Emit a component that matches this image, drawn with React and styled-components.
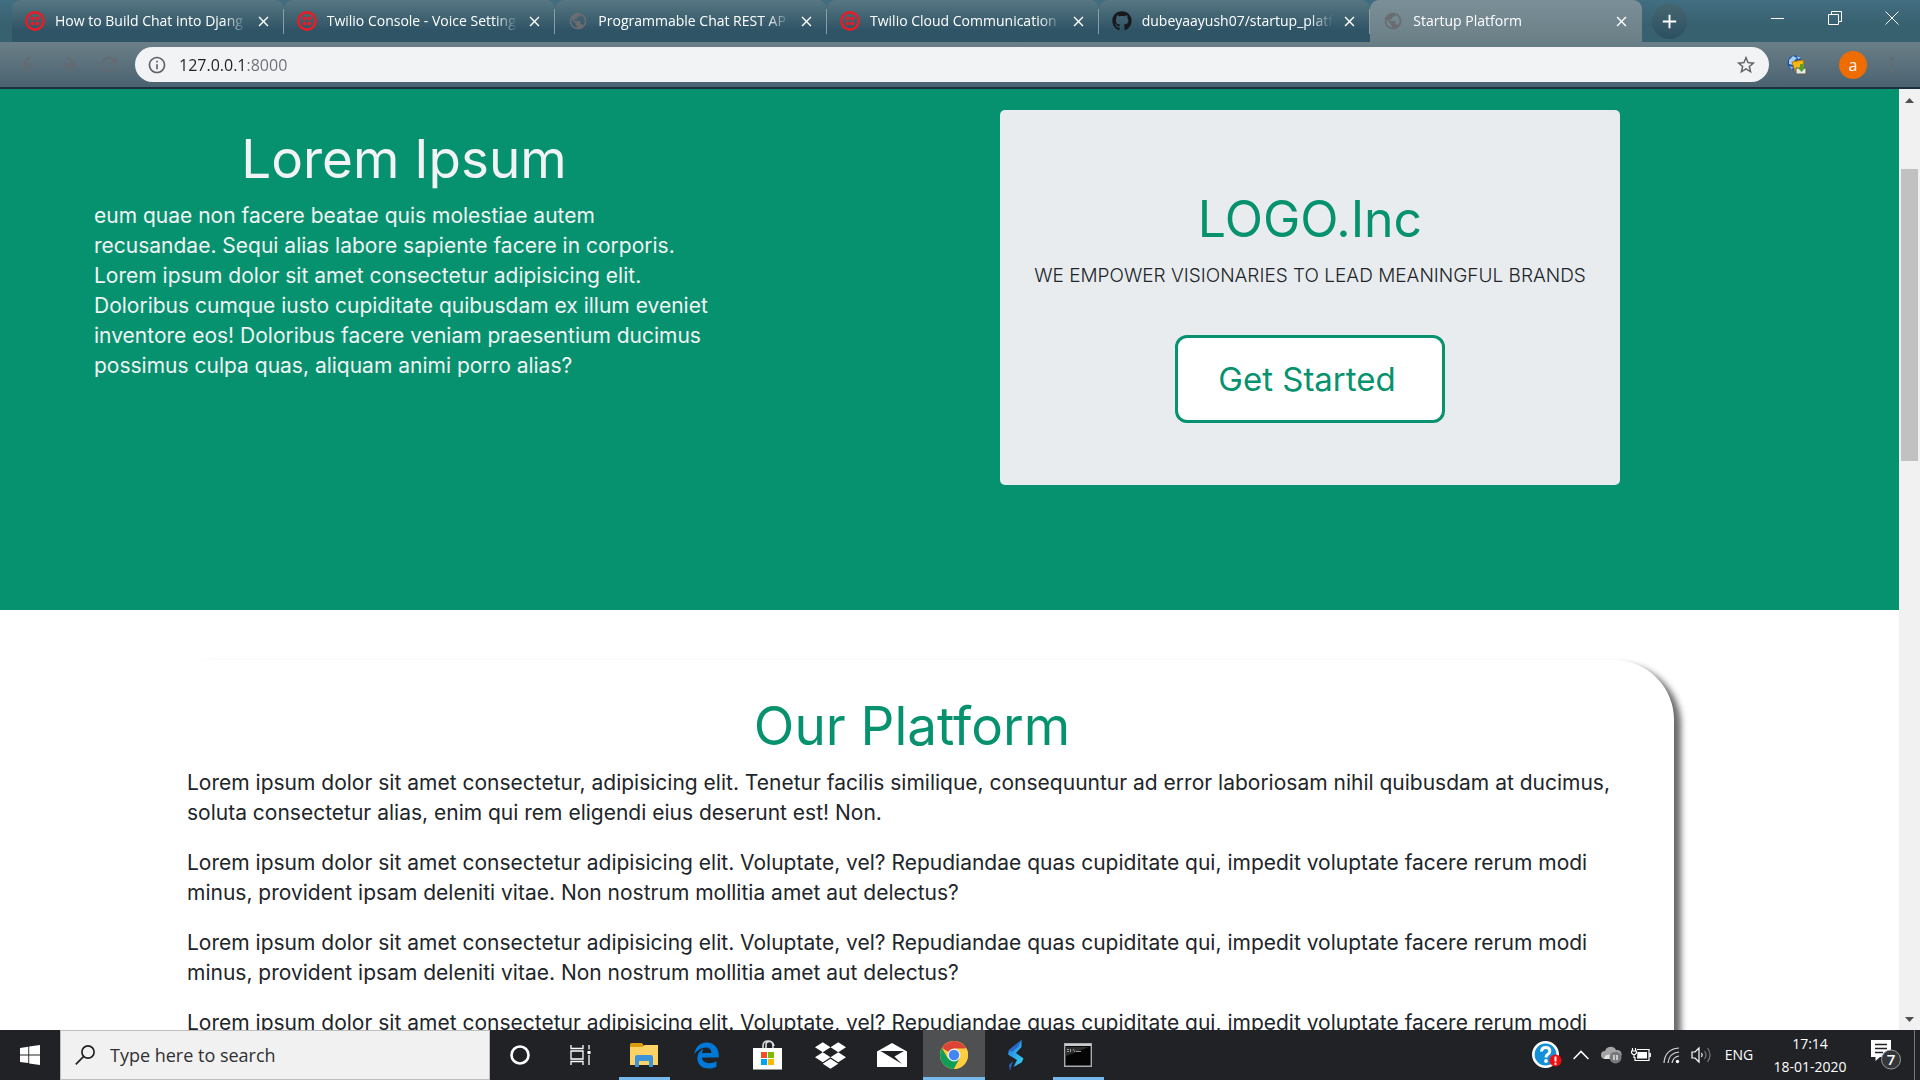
import React from "react";
import styled, { createGlobalStyle, css } from "styled-components";
import { FaGithub, FaEdgeLegacy, FaDropbox } from "react-icons/fa";
import {
  MdPublic,
  MdArrowBack,
  MdArrowForward,
  MdRefresh,
  MdInfoOutline,
  MdStarBorder,
  MdMoreVert,
  MdClose,
  MdAdd,
} from "react-icons/md";

const green = "#07926f";
const uiFont = '"Open Sans", "Noto Sans", sans-serif';
const pageFont = 'Inter, "Open Sans", sans-serif';

const GlobalStyle = createGlobalStyle`
  *, *::before, *::after { box-sizing: border-box; }
  body { margin: 0; font-family: ${uiFont}; }
  h1, h2, p { margin: 0; }
  button, input { font: inherit; }
  svg { display: block; flex: none; }
`;

const Screen = styled.div`
  display: flex;
  flex-direction: column;
  height: 100vh;
  overflow: hidden;
`;

const PlainButton = styled.button`
  display: flex;
  align-items: center;
  justify-content: center;
  padding: 0;
  border: 0;
  background: none;
  color: inherit;
`;

/* Browser window */

const TabStrip = styled.header`
  display: flex;
  flex: none;
  height: 42px;
  padding-left: 12px;
  background: linear-gradient(#426e82, #38616f 60%, #38616f);
  color: #fff;
`;

const TabList = styled.nav`
  display: flex;
  flex: 0 1 1630px;
  min-width: 0;
`;

const Tab = styled.div`
  position: relative;
  display: flex;
  flex: 1 1 0;
  align-items: center;
  min-width: 0;
  padding: 0 12px 0 13px;
  border-radius: 9px 9px 0 0;
  background: linear-gradient(#577782, #2f5466 72%);

  &:not(:last-child)::after {
    content: "";
    position: absolute;
    right: 0;
    top: 9px;
    width: 1px;
    height: 25px;
    background: #8b9da6;
  }

  ${(p) =>
    p.$active &&
    css`
      background: linear-gradient(#7b8f98, #6b7f87);
    `}
`;

const TabTitle = styled(PlainButton)`
  flex: 1;
  justify-content: flex-start;
  min-width: 0;
  margin: 0 8px 0 10px;
  overflow: hidden;
  font-size: 14px;
  line-height: 20px;
  white-space: nowrap;
  mask-image: linear-gradient(90deg, #000 88%, transparent);
`;

const NewTab = styled(PlainButton)`
  width: 35px;
  height: 35px;
  margin: 4px 0 0 10px;
  border-radius: 50%;
  background: linear-gradient(#46656f, #2c5062);
`;

const WindowControls = styled.div`
  display: flex;
  margin-left: auto;
`;

const WindowButton = styled(PlainButton)`
  width: 57px;
  height: 36px;
`;

const Toolbar = styled.div`
  display: flex;
  flex: none;
  align-items: center;
  height: 47px;
  padding: 0 20px 0 8px;
  border-bottom: 2px solid #1b3140;
  background: linear-gradient(#6a7f87, #4b6271);
  color: #666a70;
`;

const ToolButton = styled(PlainButton)`
  width: 40px;
  height: 36px;
`;

const AddressBar = styled.form`
  display: flex;
  flex: 1;
  align-items: center;
  height: 35px;
  margin-left: 7px;
  padding: 0 12px;
  border-radius: 18px;
  background: #f1f3f5;
  color: #5f6368;
`;

const AddressInput = styled.input`
  flex: 1;
  min-width: 0;
  margin-left: 12px;
  padding: 0;
  border: 0;
  outline: 0;
  font-size: 16px;
  line-height: 24px;
  color: transparent;
  background: linear-gradient(90deg, #202124 68px, #6b6f74 68px);
  background-clip: text;
`;

const Extension = styled(PlainButton)`
  width: 36px;
  height: 36px;
  margin-left: 10px;
`;

const Avatar = styled(PlainButton)`
  width: 28px;
  height: 28px;
  margin: 0 10px 0 24px;
  border-radius: 50%;
  background: #ef6c00;
  color: #fff;
  font-size: 16px;
  line-height: 24px;
`;

const MenuButton = styled(PlainButton)`
  width: 16px;
  height: 36px;
  margin-left: 7px;
`;

/* Web page */

const Viewport = styled.div`
  display: flex;
  flex: 1;
  min-height: 0;
`;

const Page = styled.main`
  flex: 1;
  min-width: 0;
  overflow: hidden;
  background: #fff;
  color: #212529;
  font-family: ${pageFont};
`;

const Hero = styled.section`
  display: grid;
  grid-template-columns: 1fr 1fr;
  column-gap: 286px;
  align-items: start;
  padding: 21px 279px 125px 94px;
  background: ${green};
`;

const Intro = styled.div`
  padding-top: 20px;
  color: #f1f3f5;
`;

const Heading = styled.h1`
  margin-bottom: 13px;
  color: ${(p) => p.$color || green};
  font-size: ${(p) => p.$size || 53}px;
  font-weight: 400;
  line-height: 58px;
  text-align: center;
`;

const Line = styled.span`
  display: block;
  white-space: nowrap;
`;

const Copy = styled.p`
  font-size: ${(p) => p.$size || 21}px;
  font-weight: ${(p) => p.$weight || 400};
  line-height: 30px;

  & + & {
    margin-top: 20px;
  }
`;

const LogoCard = styled.div`
  display: flex;
  flex-direction: column;
  align-items: center;
  padding: 80px 32px 62px;
  border-radius: 5px;
  background: #e8ecef;
`;

const StartButton = styled.button`
  width: 270px;
  margin-top: 44px;
  padding: 17px 6px 17px 0;
  border: 3px solid ${green};
  border-radius: 12px;
  background: #fff;
  color: ${green};
  font-size: 33px;
  line-height: 48px;
`;

const Platform = styled.section`
  margin: 50px 225px 0 150px;
  padding: 37px 37px 60px;
  border-radius: 60px;
  background: #fff;
  box-shadow: 7px 5px 6px #6b6b6b;
`;

const ScrollTrack = styled.div`
  display: flex;
  flex: none;
  flex-direction: column;
  align-items: center;
  width: 21px;
  background: #f1f1f1;
`;

const ScrollArrow = styled(PlainButton)`
  width: 21px;
  height: 21px;
`;

const ScrollThumb = styled.div`
  width: 17px;
  height: 292px;
  margin: 59px 0 auto;
  background: #c1c1c1;
`;

/* Taskbar */

const Taskbar = styled.footer`
  display: flex;
  flex: none;
  height: 50px;
  background: #202226;
  color: #fff;
`;

const TaskButton = styled(PlainButton)`
  width: ${(p) => p.$width || 62}px;
  height: 50px;
  background: ${(p) => (p.$active ? "#4e5052" : "none")};
`;

const OpenMark = styled.span`
  display: flex;
  align-items: center;
  justify-content: center;
  width: ${(p) => (p.$wide ? "62px" : "51px")};
  height: 50px;
  padding-top: 3px;
  border-bottom: 3px solid #76b9ed;
`;

const SearchBox = styled.label`
  display: flex;
  flex: none;
  align-items: center;
  width: 430px;
  padding-left: 14px;
  border: 1px solid #bdbdbd;
  background: #f1f1f1;
`;

const SearchInput = styled.input`
  flex: 1;
  min-width: 0;
  margin-left: 14px;
  padding: 0;
  border: 0;
  outline: 0;
  background: none;
  font-size: 18px;
  line-height: 26px;

  &::placeholder {
    color: #2f3033;
    opacity: 1;
  }
`;

const AppButtons = styled.div`
  display: flex;
  margin-left: 3px;
`;

const Tray = styled.div`
  display: flex;
  align-items: center;
  margin-left: auto;
`;

const TrayButton = styled(PlainButton)`
  width: ${(p) => p.$width || 30}px;
  height: 50px;
  font-size: 14px;
  line-height: 20px;
`;

const Clock = styled(PlainButton)`
  flex-direction: column;
  width: 96px;
  height: 50px;
  font-size: 14px;
  line-height: 23px;
`;

const ShowDesktop = styled(PlainButton)`
  width: 6px;
  height: 50px;
  border-left: 1px solid #74767a;
`;

const TwilioIcon = () => (
  <svg width="20" height="20" viewBox="0 0 20 20">
    <circle cx="10" cy="10" r="8.6" fill="none" stroke="#e31e26" strokeWidth="2.6" />
    <g fill="#e31e26">
      <circle cx="7.6" cy="7.6" r="2" />
      <circle cx="12.4" cy="7.6" r="2" />
      <circle cx="7.6" cy="12.4" r="2" />
      <circle cx="12.4" cy="12.4" r="2" />
    </g>
  </svg>
);

const Globe = () => <MdPublic size={20} color="#6a6c6f" />;

const ExtensionIcon = () => (
  <svg width="20" height="20" viewBox="0 0 20 20">
    <circle cx="8" cy="8" r="7.5" fill="#1d4f9e" />
    <path d="M2 5l4-4 4 2-3 3-1 4-4-1zM10 1l4 2-3 1z" fill="#a9cdf0" />
    <path d="M2 11l4 1-1 3z" fill="#86b5e4" />
    <path d="M5 7l11-2 1 10-9 1z" fill="#f5b916" stroke="#bb7c0a" />
    <path d="M9 13h10v6H9z" fill="#e7e7df" stroke="#5a5a55" />
    <path d="M13 9h3v4h2l-3.500 4-3.500-4h2z" fill="#4da331" />
  </svg>
);

const WindowsLogo = () => (
  <svg width="20" height="20" viewBox="0 0 20 20" fill="#fff">
    <path d="M0 3l8.300-1.200v7.700H0zM9.200 1.600L20 0v9.500H9.200zM0 10.400h8.300v7.700L0 17zM9.200 10.400H20V20L9.200 18.400z" />
  </svg>
);

const SearchGlass = () => (
  <svg width="21" height="20" viewBox="0 0 21 20" fill="none" stroke="#222" strokeWidth="1.700">
    <circle cx="13" cy="7" r="6.100" />
    <path d="M8.700 11.300L.8 19.300" />
  </svg>
);

const TaskViewIcon = () => (
  <svg width="21" height="20" viewBox="0 0 21 20" fill="none" stroke="#fff" strokeWidth="1.300">
    <path d="M1 0v3.500h12V0M1 20v-3.500h12V20M1 6h12v8H1zM19 0v4.500M19 10v10" />
    <path d="M17.500 6h3v3h-3z" fill="#fff" stroke="none" />
  </svg>
);

const ExplorerIcon = () => (
  <svg width="28" height="24" viewBox="0 0 28 24">
    <path d="M0 1.500Q0 0 1.500 0H12l2 3v5H0z" fill="#dc9b0c" />
    <path d="M0 4h12.500l2-2H28v20H0z" fill="#fdd365" />
    <path d="M5 24V14q0-2 2-2h14q2 0 2 2v10h-4v-6h-10v6z" fill="#3d93d8" />
  </svg>
);

const StoreIcon = () => (
  <svg width="30" height="30" viewBox="0 0 30 30">
    <path d="M10 9V6q0-5 5-5t5 5v3M13 8V5q0-3.500 3.500-3.500T21 6" fill="none" stroke="#ddd" strokeWidth="1.600" />
    <path d="M0 8h29v21.500H0z" fill="#fff" />
    <path d="M8 12h6v6H8z" fill="#f25022" />
    <path d="M15 12h6v6h-6z" fill="#7fba00" />
    <path d="M8 19h6v6H8z" fill="#00a4ef" />
    <path d="M15 19h6v6h-6z" fill="#ffb900" />
  </svg>
);

const MailIcon = () => (
  <svg width="30" height="24" viewBox="0 0 30 24">
    <path d="M0 8.500L15 0l15 8.500V24H0z" fill="#fff" />
    <path d="M3.500 8h23.500l-9.500 5.500 7.500 7.500z" fill="#202226" />
  </svg>
);

const ChromeIcon = () => (
  <svg width="28" height="28" viewBox="0 0 28 28">
    <circle cx="14" cy="14" r="14" fill="#ffcd40" />
    <path d="M14 14L1.880 7A14 14 0 0 1 26.120 7z" fill="#db4437" />
    <path d="M1.880 7A14 14 0 0 0 14 28l6-10.500L8 17.500z" fill="#0f9d58" />
    <path d="M14 7.500h12.400A14 14 0 0 1 14 28l5.600-10.700z" fill="#ffcd40" />
    <circle cx="14" cy="14" r="6.500" fill="#f1f1f1" />
    <circle cx="14" cy="14" r="5.200" fill="#4285f4" />
  </svg>
);

const BoltIcon = () => (
  <svg width="16" height="31" viewBox="0 0 16 31">
    <defs>
      <linearGradient id="bolt" x1="0" y1="0" x2="1" y2="1">
        <stop offset="0" stopColor="#2475e8" />
        <stop offset="1" stopColor="#35d6f0" />
      </linearGradient>
    </defs>
    <path d="M13.500 0v7L8 13l7.500 5.500-2 4-8 4.500 3.500-7L0 14.500 1 10z" fill="url(#bolt)" />
    <path d="M13.500 0L1 10l3 2 6-5zM2 31l3-10-4 4z" fill="#2b66c9" />
  </svg>
);

const TerminalIcon = () => (
  <svg width="28" height="24" viewBox="0 0 28 24">
    <path d="M.7.700h26.600v22.600H.7z" fill="#050505" stroke="#a9abad" strokeWidth="1.400" />
    <path d="M1 1h26v2H1z" fill="#c9cbcd" />
    <path d="M2 4h23L2 13z" fill="#2c2e30" />
    <path d="M3 6.500h2M3 8.500h2M6.500 6v3M9 6l2 3M12 8.500h5" stroke="#bbb" strokeWidth=".8" fill="none" />
  </svg>
);

const HelpIcon = () => (
  <svg width="30" height="28" viewBox="0 0 30 28">
    <circle cx="13.500" cy="13.500" r="12.200" fill="#1290d8" stroke="#fff" strokeWidth="2.600" />
    <path d="M9.500 10.500q.3-4 4.300-4t4 3.700q0 2-2.200 3.300-1.600 1-1.600 3" fill="none" stroke="#fff" strokeWidth="3" />
    <circle cx="14" cy="20" r="1.900" fill="#fff" />
    <circle cx="23.500" cy="19.500" r="6" fill="#f00d0d" />
    <path d="M23.500 15.500v5M23.500 21.800v2" stroke="#fff" strokeWidth="2" />
  </svg>
);

const ChevronUp = () => (
  <svg width="16" height="10" viewBox="0 0 16 10" fill="none" stroke="#fff" strokeWidth="1.500">
    <path d="M.6 9L8 1.400 15.400 9" />
  </svg>
);

const CloudIcon = () => (
  <svg width="21" height="18" viewBox="0 0 21 18">
    <path d="M4 13a4 4 0 0 1 0-8 6 6 0 0 1 11-1 4.500 4.500 0 0 1 2 9z" fill="#a5a5a5" />
    <path d="M3 13q1-5 6-4l5-4 2 8z" fill="#e3e3e3" />
    <circle cx="14.500" cy="11.500" r="6" fill="#77797b" />
    <path d="M13 9v5M16 9v5" stroke="#fff" strokeWidth="1.200" />
  </svg>
);

const BatteryIcon = () => (
  <svg width="20" height="14" viewBox="0 0 20 14" fill="none" stroke="#fff">
    <path d="M6 1.500h12v11H4V9M19.300 5v4M1.500 0v3M4.500 0v3M.5 3h5v2L4 6.500H2L.5 5zM3 7v3" strokeWidth="1.200" />
    <path d="M6.500 4H16v6.500H6z" fill="#fff" stroke="none" />
  </svg>
);

const WifiIcon = () => (
  <svg width="17" height="17" viewBox="0 0 17 17" fill="none" stroke="#d8d8d8" strokeWidth="1.200">
    <path d="M1 16Q2 2 16 1M5 16Q6 6 16 5M9 16Q10 10 16 9" />
    <circle cx="14.500" cy="14.500" r="1.700" fill="#fff" stroke="none" />
  </svg>
);

const SpeakerIcon = () => (
  <svg width="21" height="18" viewBox="0 0 21 18" fill="none" stroke="#fff" strokeWidth="1.200">
    <path d="M1 6h3l4-4v14l-4-4H1zM10.500 7q1.500 2 0 4" />
    <path d="M13.500 5q3 4 0 8M16.500 2q5 7 0 14" stroke="#77797b" />
  </svg>
);

const ActionIcon = () => (
  <svg width="30" height="32" viewBox="0 0 30 32">
    <path d="M0 1h20v17H9l-4.500 4v-4H0z" fill="#fff" />
    <path d="M4 5.500h12M4 9.500h12M4 13.500h8" stroke="#202226" strokeWidth="1.300" />
    <circle cx="20" cy="20.500" r="9.500" fill="#34363a" stroke="#999b9e" />
    <text x="20" y="26" textAnchor="middle" fontSize="15" fontWeight="600" fill="#fff">7</text>
  </svg>
);

const tabs = [
  { title: "How to Build Chat into Djang", icon: <TwilioIcon /> },
  { title: "Twilio Console - Voice Setting", icon: <TwilioIcon /> },
  { title: "Programmable Chat REST AP", icon: <Globe /> },
  { title: "Twilio Cloud Communication", icon: <TwilioIcon /> },
  { title: "dubeyaayush07/startup_platf", icon: <FaGithub size={20} color="#17191c" /> },
  { title: "Startup Platform", icon: <Globe />, active: true },
];

const introLines = [
  "eum quae non facere beatae quis molestiae autem",
  "recusandae. Sequi alias labore sapiente facere in corporis.",
  "Lorem ipsum dolor sit amet consectetur adipisicing elit.",
  "Doloribus cumque iusto cupiditate quibusdam ex illum eveniet",
  "inventore eos! Doloribus facere veniam praesentium ducimus",
  "possimus culpa quas, aliquam animi porro alias?",
];

const repeated = [
  "Lorem ipsum dolor sit amet consectetur adipisicing elit. Voluptate, vel? Repudiandae quas cupiditate qui, impedit voluptate facere rerum modi",
  "minus, provident ipsam deleniti vitae. Non nostrum mollitia amet aut delectus?",
];

const platformCopy = [
  [
    "Lorem ipsum dolor sit amet consectetur, adipisicing elit. Tenetur facilis similique, consequuntur ad error laboriosam nihil quibusdam at ducimus,",
    "soluta consectetur alias, enim qui rem eligendi eius deserunt est! Non.",
  ],
  repeated,
  repeated,
  repeated,
];

const apps = [
  { name: "File Explorer", icon: <ExplorerIcon />, open: true },
  { name: "Microsoft Edge", icon: <FaEdgeLegacy size={27} color="#0078d7" /> },
  { name: "Microsoft Store", icon: <StoreIcon /> },
  { name: "Dropbox", icon: <FaDropbox size={31} /> },
  { name: "Mail", icon: <MailIcon /> },
  { name: "Google Chrome", icon: <ChromeIcon />, open: true, active: true },
  { name: "Stack", icon: <BoltIcon /> },
  { name: "Command Prompt", icon: <TerminalIcon />, open: true },
];

const Lines = ({ lines }) => lines.map((line) => <Line key={line}>{line} </Line>);

function BrowserChrome() {
  return (
    <>
      <TabStrip>
        <TabList>
          {tabs.map((tab) => (
            <Tab key={tab.title} $active={tab.active}>
              {tab.icon}
              <TabTitle>{tab.title}</TabTitle>
              <PlainButton aria-label="Close tab">
                <MdClose size={17} />
              </PlainButton>
            </Tab>
          ))}
        </TabList>
        <NewTab aria-label="New tab">
          <MdAdd size={23} />
        </NewTab>
        <WindowControls>
          <WindowButton aria-label="Minimize">
            <svg width="13" height="13" stroke="#fff"><path d="M0 6.500h13" /></svg>
          </WindowButton>
          <WindowButton aria-label="Restore">
            <svg width="14" height="14" fill="none" stroke="#fff">
              <path d="M.5 3.500h10v10H.5zM3.500 3V.5h10v10H11" />
            </svg>
          </WindowButton>
          <WindowButton aria-label="Close">
            <svg width="14" height="14" stroke="#fff"><path d="M.5.500l13 13M13.500.500l-13 13" /></svg>
          </WindowButton>
        </WindowControls>
      </TabStrip>
      <Toolbar>
        <ToolButton aria-label="Back"><MdArrowBack size={23} /></ToolButton>
        <ToolButton aria-label="Forward"><MdArrowForward size={23} /></ToolButton>
        <ToolButton aria-label="Reload"><MdRefresh size={23} /></ToolButton>
        <AddressBar>
          <MdInfoOutline size={20} />
          <AddressInput aria-label="Address" defaultValue="127.0.0.1:8000" />
          <PlainButton type="button" aria-label="Bookmark"><MdStarBorder size={22} /></PlainButton>
        </AddressBar>
        <Extension aria-label="Download manager"><ExtensionIcon /></Extension>
        <Avatar>a</Avatar>
        <MenuButton aria-label="Menu"><MdMoreVert size={24} /></MenuButton>
      </Toolbar>
    </>
  );
}

function WebPage() {
  return (
    <Page>
      <Hero>
        <Intro>
          <Heading $color="#f1f3f5">Lorem Ipsum</Heading>
          <Copy><Lines lines={introLines} /></Copy>
        </Intro>
        <LogoCard>
          <Heading as="h2" $size={50}>LOGO.Inc</Heading>
          <Copy $size={19} $weight={300}><Line>WE EMPOWER VISIONARIES TO LEAD MEANINGFUL BRANDS</Line></Copy>
          <StartButton>Get Started</StartButton>
        </LogoCard>
      </Hero>
      <Platform>
        <Heading as="h2">Our Platform</Heading>
        {platformCopy.map((lines, i) => (
          <Copy key={i}><Lines lines={lines} /></Copy>
        ))}
      </Platform>
    </Page>
  );
}

export default function App() {
  return (
    <Screen>
      <GlobalStyle />
      <BrowserChrome />
      <Viewport>
        <WebPage />
        <ScrollTrack>
          <ScrollArrow aria-label="Scroll up">
            <svg width="9" height="6" fill="#505050"><path d="M0 6l4.500-5L9 6z" /></svg>
          </ScrollArrow>
          <ScrollThumb />
          <ScrollArrow aria-label="Scroll down">
            <svg width="9" height="6" fill="#505050"><path d="M0 0l4.500 5L9 0z" /></svg>
          </ScrollArrow>
        </ScrollTrack>
      </Viewport>
      <Taskbar>
        <TaskButton $width={60} aria-label="Start"><WindowsLogo /></TaskButton>
        <SearchBox>
          <SearchGlass />
          <SearchInput aria-label="Search" placeholder="Type here to search" />
        </SearchBox>
        <TaskButton $width={60} aria-label="Cortana">
          <svg width="20" height="20" fill="none" stroke="#fff" strokeWidth="2.600"><circle cx="10" cy="10" r="8.500" /></svg>
        </TaskButton>
        <TaskButton $width={60} aria-label="Task view"><TaskViewIcon /></TaskButton>
        <AppButtons>
          {apps.map((app) => (
            <TaskButton key={app.name} aria-label={app.name} $active={app.active}>
              {app.open ? <OpenMark $wide={app.active}>{app.icon}</OpenMark> : app.icon}
            </TaskButton>
          ))}
        </AppButtons>
        <Tray>
          <TrayButton $width={38} aria-label="Help"><HelpIcon /></TrayButton>
          <TrayButton aria-label="Show hidden icons"><ChevronUp /></TrayButton>
          <TrayButton aria-label="OneDrive"><CloudIcon /></TrayButton>
          <TrayButton aria-label="Battery"><BatteryIcon /></TrayButton>
          <TrayButton aria-label="Network"><WifiIcon /></TrayButton>
          <TrayButton aria-label="Volume"><SpeakerIcon /></TrayButton>
          <TrayButton $width={46}>ENG</TrayButton>
          <Clock>
            <span>17:14</span>
            <span>18-01-2020</span>
          </Clock>
          <TrayButton $width={56} aria-label="Notifications"><ActionIcon /></TrayButton>
          <ShowDesktop aria-label="Show desktop" />
        </Tray>
      </Taskbar>
    </Screen>
  );
}
